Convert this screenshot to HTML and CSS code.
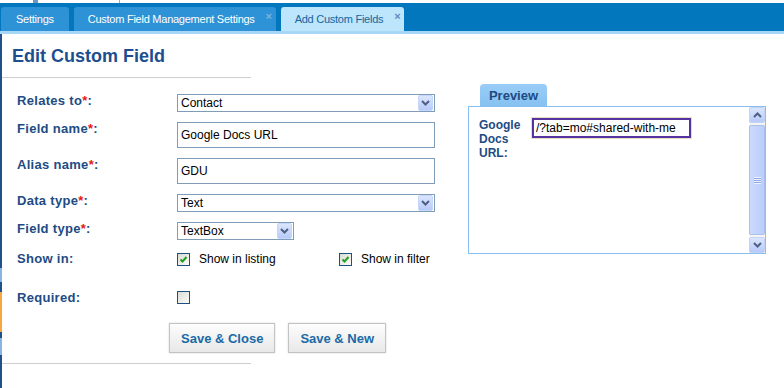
FILE: index.html
```html
<!DOCTYPE html>
<html lang="en">
<head>
    <meta charset="UTF-8">
    <title>Edit Custom Field</title>
    <link rel="stylesheet" href="styles.css">
</head>
<body>
    <div class="topstrip"><span class="mark mark-a"></span><span class="mark mark-b"></span></div>

    <div class="tabbar">
        <div class="tab">Settings</div>
        <div class="tab tab-closable">Custom Field Management Settings<span class="tab-close">×</span></div>
        <div class="tab tab-closable tab-active">Add Custom Fields<span class="tab-close">×</span></div>
    </div>
    <div class="tabline"></div>

    <div class="page">
        <div class="sidebar-edge"></div>

        <div class="form-col">
            <h1 class="form-title">Edit Custom Field</h1>

            <div class="form-rows">
                <div class="row">
                    <div class="label">Relates to<span class="req">*</span>:</div>
                    <div class="select">
                        <span>Contact</span>
                        <span class="arrow"><svg width="9" height="6" viewBox="0 0 9 6"><path d="M1 1 L4.5 4.5 L8 1" fill="none" stroke="#4d6185" stroke-width="2"/></svg></span>
                    </div>
                </div>
                <div class="row">
                    <div class="label">Field name<span class="req">*</span>:</div>
                    <div class="input">Google Docs URL</div>
                </div>
                <div class="row">
                    <div class="label">Alias name<span class="req">*</span>:</div>
                    <div class="input">GDU</div>
                </div>
                <div class="row">
                    <div class="label">Data type<span class="req">*</span>:</div>
                    <div class="select">
                        <span>Text</span>
                        <span class="arrow"><svg width="9" height="6" viewBox="0 0 9 6"><path d="M1 1 L4.5 4.5 L8 1" fill="none" stroke="#4d6185" stroke-width="2"/></svg></span>
                    </div>
                </div>
                <div class="row">
                    <div class="label">Field type<span class="req">*</span>:</div>
                    <div class="select select-narrow">
                        <span>TextBox</span>
                        <span class="arrow"><svg width="9" height="6" viewBox="0 0 9 6"><path d="M1 1 L4.5 4.5 L8 1" fill="none" stroke="#4d6185" stroke-width="2"/></svg></span>
                    </div>
                </div>
                <div class="row row-check">
                    <div class="label">Show in:</div>
                    <div class="check-group">
                        <div class="check-item">
                            <span class="checkbox"><svg width="11" height="11" viewBox="0 0 11 11"><path d="M2.5 5.5 L4.5 7.5 L8.5 3" fill="none" stroke="#22a022" stroke-width="2"/></svg></span>
                            <span>Show in listing</span>
                        </div>
                        <div class="check-item">
                            <span class="checkbox"><svg width="11" height="11" viewBox="0 0 11 11"><path d="M2.5 5.5 L4.5 7.5 L8.5 3" fill="none" stroke="#22a022" stroke-width="2"/></svg></span>
                            <span>Show in filter</span>
                        </div>
                    </div>
                </div>
                <div class="row row-required">
                    <div class="label">Required:</div>
                    <span class="checkbox"></span>
                </div>
            </div>

            <div class="actions">
                <button class="btn">Save &amp; Close</button>
                <button class="btn">Save &amp; New</button>
            </div>
            <div class="form-foot"></div>
        </div>

        <div class="preview-col">
            <div class="preview-tab">Preview</div>
            <div class="preview-box">
                <div class="preview-body">
                    <div class="preview-label">Google Docs URL:</div>
                    <div class="preview-input">/?tab=mo#shared-with-me</div>
                </div>
                <div class="scrollbar">
                    <div class="sb-btn"><svg width="9" height="6" viewBox="0 0 9 6"><path d="M1 5 L4.5 1.5 L8 5" fill="none" stroke="#4d6185" stroke-width="2"/></svg></div>
                    <div class="sb-track">
                        <div class="sb-thumb"><span class="grip"></span></div>
                    </div>
                    <div class="sb-btn"><svg width="9" height="6" viewBox="0 0 9 6"><path d="M1 1 L4.5 4.5 L8 1" fill="none" stroke="#4d6185" stroke-width="2"/></svg></div>
                </div>
            </div>
        </div>
    </div>
</body>
</html>
```

FILE: styles.css
```css
body {
    margin: 0;
    width: 784px;
    height: 388px;
    overflow: hidden;
    background: #fff;
    font-family: "Liberation Sans", Arial, sans-serif;
    font-size: 12px;
    color: #000;
}

/* top tabs */
.topstrip {
    height: 3px;
    display: flex;
}

.mark {
    display: block;
    height: 3px;
}

.mark-a {
    margin-left: 33px;
    width: 5px;
    background: #6d97c4;
}

.mark-b {
    margin-left: 81px;
    width: 1px;
    background: #aaa;
}

.tabbar {
    height: 28px;
    background: #0277be;
    display: flex;
    align-items: flex-end;
    gap: 5px;
    padding-left: 1px;
}

.tab {
    position: relative;
    height: 24px;
    line-height: 24px;
    padding: 0 15px;
    background: #2e92d6;
    color: #fff;
    font-size: 11px;
    letter-spacing: -0.25px;
    border-radius: 3px 3px 0 0;
}

.tab-closable {
    padding: 0 21px 0 14px;
}

.tab-active {
    background: #bde5fb;
    color: #1565a1;
}

.tab-close {
    position: absolute;
    right: 4px;
    top: 4px;
    font-size: 11px;
    line-height: 11px;
    font-weight: bold;
    color: #79b3df;
}

.tab-active .tab-close {
    color: #5a8fbd;
}

.tabline {
    height: 3px;
    background: #a6d7f8;
}

/* page */
.page {
    display: flex;
    height: 354px;
}

.sidebar-edge {
    width: 2px;
    flex-shrink: 0;
    background: linear-gradient(to bottom,
        #1f5089 0, #1f5089 234px,
        #8bb3df 234px, #8bb3df 248px,
        #1f5089 248px, #1f5089 258px,
        #f6a83f 258px, #f6a83f 298px,
        #1f5089 298px, #1f5089 304px,
        #8bb3df 304px, #8bb3df 321px,
        #1f5089 321px);
}

.form-col {
    width: 449px;
    flex-shrink: 0;
}

.form-title {
    box-sizing: border-box;
    width: 249px;
    margin: 0;
    padding: 11px 0 10px 10px;
    font-size: 18px;
    line-height: 22px;
    color: #1d4e8f;
    border-bottom: 1px solid #cfcfcf;
}

.form-rows {
    padding: 16px 0 0 15px;
}

.row {
    display: flex;
    align-items: flex-start;
    margin-top: 10px;
}

.row:first-child {
    margin-top: 0;
}

.row-check {
    margin-top: 12px;
}

.row-required {
    margin-top: 25px;
}

.label {
    width: 160px;
    flex-shrink: 0;
    font-size: 13px;
    line-height: 13px;
    font-weight: bold;
    letter-spacing: 0.3px;
    color: #214b84;
}

.req {
    color: #e8141b;
}

.select {
    box-sizing: border-box;
    width: 258px;
    height: 18px;
    border: 1px solid #7f9db9;
    padding-left: 3px;
    display: flex;
    align-items: center;
    justify-content: space-between;
    font-size: 12px;
}

.select-narrow {
    width: 117px;
}

.arrow {
    box-sizing: border-box;
    width: 15px;
    height: 16px;
    margin-right: 1px;
    display: flex;
    align-items: center;
    justify-content: center;
    background: linear-gradient(#dbe5fd, #b7cbf8);
    border: 1px solid #c6d5fb;
    border-radius: 2px;
}

.input {
    box-sizing: border-box;
    width: 258px;
    height: 26px;
    border: 1px solid #7f9db9;
    padding-left: 3px;
    line-height: 24px;
    font-size: 12px;
}

.check-group {
    display: flex;
}

.check-item {
    width: 162px;
    display: flex;
    align-items: center;
    gap: 9px;
    font-size: 12px;
}

.checkbox {
    box-sizing: border-box;
    width: 13px;
    height: 13px;
    border: 1px solid #1c5180;
    background: linear-gradient(135deg, #dcdcd5, #fbfbf9);
    display: flex;
}

.actions {
    display: flex;
    gap: 13px;
    margin-top: 19px;
    padding-left: 167px;
}

.btn {
    height: 30px;
    padding: 0 11px;
    border: 1px solid #c3c3c3;
    background: linear-gradient(#fdfdfd, #e8e8e8);
    box-shadow: 0 0 2px rgba(0, 0, 0, 0.15);
    font-family: "Liberation Sans", Arial, sans-serif;
    font-size: 13px;
    font-weight: bold;
    color: #1a6aa6;
}

.form-foot {
    width: 249px;
    margin-top: 10px;
    border-top: 1px solid #cfcfcf;
}

/* preview */
.preview-col {
    width: 298px;
    margin-left: 17px;
    padding-top: 50px;
}

.preview-tab {
    width: 67px;
    height: 22px;
    margin-left: 12px;
    background: linear-gradient(#9acdf6, #86c1f2);
    border-radius: 4px 4px 0 0;
    text-align: center;
    font-size: 13px;
    line-height: 23px;
    font-weight: bold;
    color: #1d4a80;
}

.preview-box {
    box-sizing: border-box;
    height: 148px;
    border: 1px solid #88bff0;
    display: flex;
}

.preview-body {
    flex: 1;
    display: flex;
    align-items: flex-start;
    padding: 11px 0 0 10px;
}

.preview-label {
    width: 50px;
    margin-right: 3px;
    font-size: 12px;
    line-height: 14px;
    font-weight: bold;
    color: #214b84;
}

.preview-input {
    box-sizing: border-box;
    width: 159px;
    height: 20px;
    border: 2px solid #5334a0;
    box-shadow: 0 0 0 1px #eadcc0;
    padding-left: 2px;
    font-size: 12px;
    line-height: 16px;
}

.scrollbar {
    width: 16px;
    display: flex;
    flex-direction: column;
    background: #f5f4ef;
}

.sb-btn {
    box-sizing: border-box;
    height: 16px;
    display: flex;
    align-items: center;
    justify-content: center;
    background: linear-gradient(#dbe5fd, #b7cbf8);
    border: 1px solid #c3d2f8;
    border-radius: 2px;
}

.sb-track {
    flex: 1;
    padding: 2px 0;
    display: flex;
}

.sb-thumb {
    flex: 1;
    box-sizing: border-box;
    border: 1px solid #a9bff2;
    border-radius: 2px;
    background: linear-gradient(to right, #cbd9fd, #bccefa);
    display: flex;
    align-items: center;
    justify-content: center;
}

.grip {
    width: 7px;
    height: 7px;
    background: repeating-linear-gradient(to bottom, #eef3ff 0, #eef3ff 1px, #8da6e3 1px, #8da6e3 2px);
}
```
